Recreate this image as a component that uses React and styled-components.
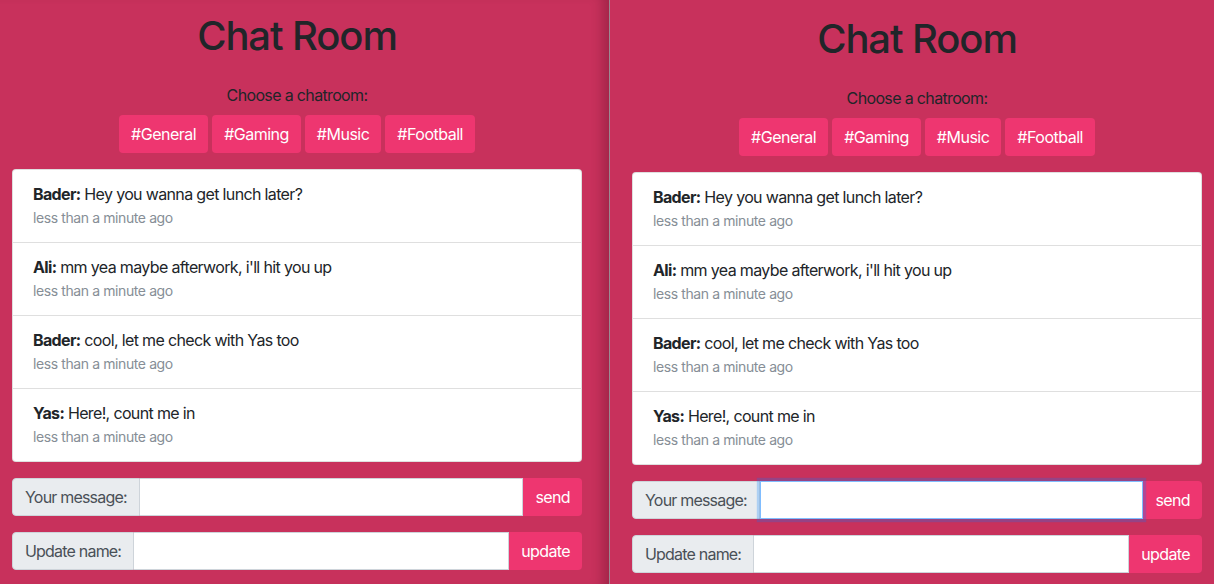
import React from "react";
import styled, { createGlobalStyle } from "styled-components";

const GlobalStyle = createGlobalStyle`
  html, body {
    margin: 0;
    padding: 0;
    background: #c8315c;
  }
  body {
    font-family: Inter, "Noto Sans", "Liberation Sans", sans-serif;
    color: #212529;
    font-size: 16px;
    line-height: 1.5;
    letter-spacing: -0.65px;
  }
  * { box-sizing: border-box; }
`;

const Screen = styled.div`
  display: flex;
  height: 584px;
  overflow: hidden;
`;

const Pane = styled.div`
  flex: ${(p) => (p.$side === "left" ? "0 0 609px" : "1 1 auto")};
  background: #c8315c;
  padding: ${(p) => (p.$side === "left" ? "12px 27px 0 12px" : "15px 12px 0 22px")};
  box-shadow: ${(p) =>
    p.$side === "left" ? "inset -14px 0 12px -8px rgba(60, 0, 20, 0.28)" : "none"};
  display: flex;
  flex-direction: column;
`;

const Divider = styled.div`
  flex: 0 0 1px;
  background: #9c8a92;
`;

const Title = styled.h1`
  margin: 0;
  font-size: 40px;
  line-height: 48px;
  font-weight: 500;
  text-align: center;
  letter-spacing: -1.1px;
  color: #212529;
`;

const Prompt = styled.p`
  margin: 23px 0 8px;
  text-align: center;
  font-size: 16px;
  line-height: 24px;
  color: #212529;
`;

const RoomBar = styled.div`
  display: flex;
  justify-content: center;
  gap: 4px;
`;

const RoomButton = styled.button`
  height: 38px;
  padding: 6px 12px;
  border: none;
  border-radius: 4px;
  background: #ee3670;
  color: #fff;
  font-family: inherit;
  font-size: 16px;
  line-height: 24px;
  letter-spacing: -0.5px;
  cursor: pointer;
`;

const MessageList = styled.ul`
  list-style: none;
  margin: 16px 0 0;
  padding: 0;
  background: #fff;
  border: 1px solid rgba(0, 0, 0, 0.125);
  border-radius: 4px;
`;

const MessageItem = styled.li`
  padding: 12px 20px;
  border-top: ${(p) => (p.$first ? "none" : "1px solid rgba(0, 0, 0, 0.125)")};
`;

const MessageLine = styled.div`
  font-size: 16px;
  line-height: 24px;
  color: #212529;
`;

const Author = styled.strong`
  font-weight: 700;
`;

const Time = styled.div`
  font-size: 14px;
  line-height: 24px;
  letter-spacing: -0.4px;
  color: #868e96;
`;

const InputGroup = styled.div`
  display: flex;
  height: 38px;
  margin-top: ${(p) => p.$mt}px;
`;

const Addon = styled.span`
  display: flex;
  align-items: center;
  padding: 6px 12px;
  background: #e9ecef;
  border: 1px solid #ced4da;
  border-radius: 4px 0 0 4px;
  color: #495057;
  font-size: 16px;
  letter-spacing: -0.8px;
  white-space: nowrap;
`;

const TextInput = styled.input`
  flex: 1 1 auto;
  min-width: 0;
  height: 38px;
  padding: 6px 12px;
  border: 1px solid ${(p) => (p.$focused ? "#80bdff" : "#ced4da")};
  border-left: ${(p) => (p.$focused ? "1px solid #80bdff" : "none")};
  box-shadow: ${(p) => (p.$focused ? "0 0 0 3.2px rgba(0, 123, 255, 0.25)" : "none")};
  position: relative;
  z-index: ${(p) => (p.$focused ? 2 : 0)};
  font-family: inherit;
  font-size: 16px;
  outline: none;
  background: #fff;
`;

const ActionButton = styled.button`
  height: 38px;
  padding: 6px 12px;
  border: none;
  border-radius: 0 4px 4px 0;
  background: #ee3670;
  color: #fff;
  font-family: inherit;
  font-size: 16px;
  line-height: 24px;
  letter-spacing: -0.6px;
  cursor: pointer;
`;

const rooms = ["#General", "#Gaming", "#Music", "#Football"];

const messages = [
  { name: "Bader", text: "Hey you wanna get lunch later?" },
  { name: "Ali", text: "mm yea maybe afterwork, i'll hit you up" },
  { name: "Bader", text: "cool, let me check with Yas too" },
  { name: "Yas", text: "Here!, count me in" },
];

function ChatRoom({ side, focused }) {
  return (
    <Pane $side={side}>
      <Title>Chat Room</Title>
      <Prompt>Choose a chatroom:</Prompt>
      <RoomBar>
        {rooms.map((r) => (
          <RoomButton key={r}>{r}</RoomButton>
        ))}
      </RoomBar>
      <MessageList>
        {messages.map((m, i) => (
          <MessageItem key={i} $first={i === 0}>
            <MessageLine>
              <Author>{m.name}:</Author> {m.text}
            </MessageLine>
            <Time>less than a minute ago</Time>
          </MessageItem>
        ))}
      </MessageList>
      <InputGroup $mt={16}>
        <Addon>Your message:</Addon>
        <TextInput $focused={focused} readOnly value="" />
        <ActionButton>send</ActionButton>
      </InputGroup>
      <InputGroup $mt={16}>
        <Addon>Update name:</Addon>
        <TextInput readOnly value="" />
        <ActionButton>update</ActionButton>
      </InputGroup>
    </Pane>
  );
}

export default function App() {
  return (
    <>
      <GlobalStyle />
      <Screen>
        <ChatRoom side="left" />
        <Divider />
        <ChatRoom side="right" focused />
      </Screen>
    </>
  );
}
